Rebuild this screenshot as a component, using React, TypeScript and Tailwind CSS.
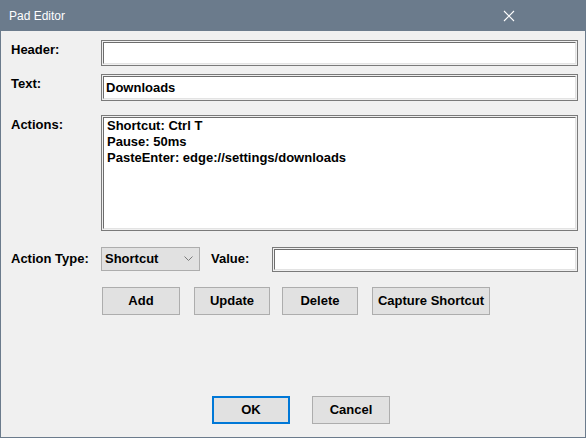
const font = { fontFamily: '"Liberation Sans", Arial, sans-serif' }

function Field({ className, children }: { className?: string; children?: React.ReactNode }) {
  return (
    <div className={`border border-[#7a7a7a] bg-[#f0f0f0] p-px ${className ?? ''}`}>
      <div className="h-full border-t border-l border-[#6d6d6d] border-r-[#e3e3e3] border-b-[#e3e3e3] border-r border-b bg-white">
        {children}
      </div>
    </div>
  )
}

function Button({ label, className }: { label: string; className?: string }) {
  return (
    <div
      className={`flex h-[28px] items-center justify-center border border-[#adadad] bg-[#e1e1e1] text-[13px] font-bold text-black ${className ?? ''}`}
    >
      {label}
    </div>
  )
}

export default function App() {
  return (
    <div
      className="flex h-[438px] w-[586px] flex-col bg-[#6b7b8c] px-px pb-px"
      style={font}
    >
      {/* title bar */}
      <div className="flex h-[31px] shrink-0 items-center justify-between pr-[70px] pl-[8px]">
        <span className="text-[12px] text-white">Pad Editor</span>
        <svg width="12" height="12" viewBox="0 0 12 12" className="mt-px">
          <path d="M1 1 L11 11 M11 1 L1 11" stroke="#ffffff" strokeWidth="1.1" />
        </svg>
      </div>

      <div className="flex flex-1 flex-col bg-[#f0f0f0] pr-[7px] pl-[10px] text-[13px] leading-[16px] font-bold text-black">
        <div className="mt-[9px] flex items-start">
          <div className="w-[90px] pt-[2px]">Header:</div>
          <Field className="h-[26px] flex-1" />
        </div>

        <div className="mt-[8px] flex items-start">
          <div className="w-[90px] pt-[2px]">Text:</div>
          <Field className="h-[27px] flex-1">
            <div className="flex h-full items-center pl-[2px]">Downloads</div>
          </Field>
        </div>

        <div className="mt-[14px] flex items-start">
          <div className="w-[90px] pt-[2px]">Actions:</div>
          <Field className="h-[116px] flex-1">
            <div className="pl-[3px]">
              <div>Shortcut: Ctrl T</div>
              <div>Pause: 50ms</div>
              <div>PasteEnter: edge://settings/downloads</div>
            </div>
          </Field>
        </div>

        <div className="mt-[16px] flex h-[24px] items-center">
          <div className="w-[90px]">Action Type:</div>
          <div className="flex h-[24px] w-[99px] items-center justify-between border border-[#adadad] bg-[#e1e1e1] pr-[6px] pl-[3px]">
            <span>Shortcut</span>
            <svg width="9" height="6" viewBox="0 0 9 6">
              <path d="M0.5 0.5 L4.5 4.5 L8.5 0.5" stroke="#7a7a7a" strokeWidth="1" fill="none" />
            </svg>
          </div>
          <div className="ml-[11px] w-[61px]">Value:</div>
          <Field className="h-[25px] flex-1" />
        </div>

        <div className="mt-[16px] flex pl-[91px]">
          <Button label="Add" className="w-[78px]" />
          <Button label="Update" className="ml-[14px] w-[76px]" />
          <Button label="Delete" className="ml-[12px] w-[76px]" />
          <Button label="Capture Shortcut" className="ml-[14px] w-[118px]" />
        </div>

        <div className="mt-[81px] flex pl-[201px]">
          <div className="flex h-[28px] w-[78px] items-center justify-center border-2 border-[#0078d7] bg-[#e1e1e1]">
            OK
          </div>
          <Button label="Cancel" className="ml-[22px] w-[78px]" />
        </div>
      </div>
    </div>
  )
}
